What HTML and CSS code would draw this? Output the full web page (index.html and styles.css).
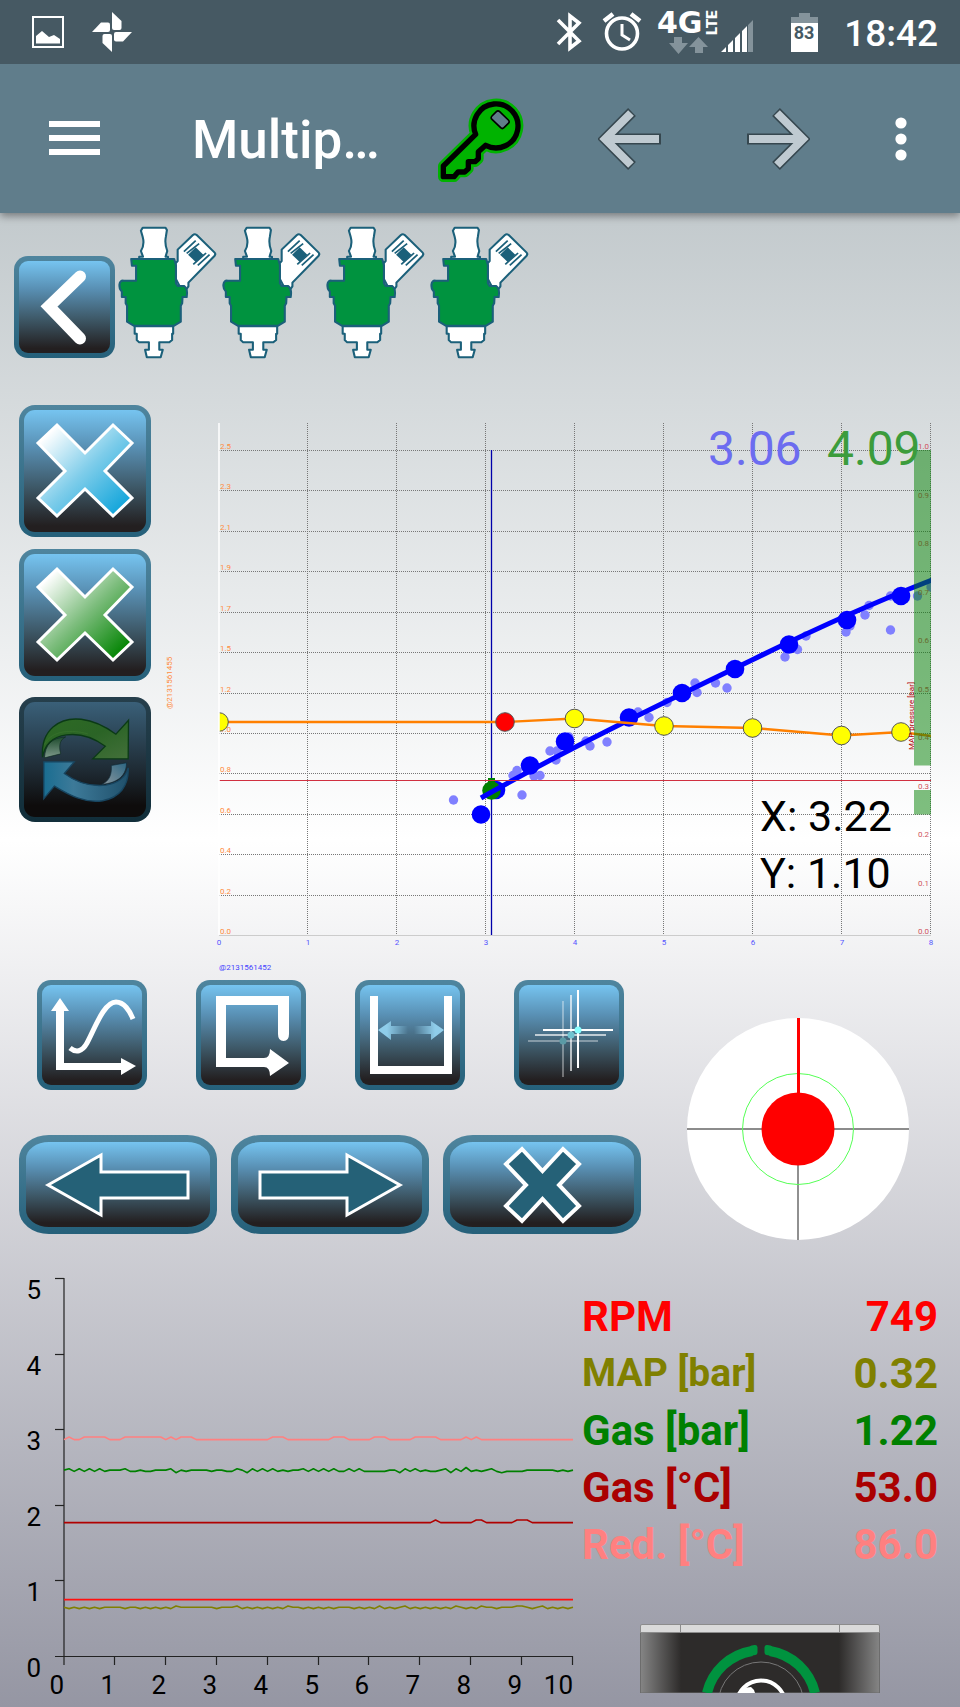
FILE: index.html
```html
<!DOCTYPE html>
<html lang="en">
<head>
<meta charset="utf-8">
<meta name="viewport" content="width=device-width, initial-scale=1">
<title>Multipoint calibration</title>
<link rel="stylesheet" href="styles.css">
</head>
<body>
<svg class="defs" aria-hidden="true">
  <defs>
    <linearGradient id="gBlue" x1="0" y1="0" x2="1" y2="1"><stop offset=".1" stop-color="#fff"/><stop offset=".5" stop-color="#7fcdea"/><stop offset=".9" stop-color="#14a6db"/></linearGradient>
    <linearGradient id="gGreen" x1="0" y1="0" x2="1" y2="1"><stop offset=".1" stop-color="#fff"/><stop offset=".5" stop-color="#7dbd7d"/><stop offset=".9" stop-color="#058505"/></linearGradient>
    <linearGradient id="fadeL"><stop offset=".3" stop-color="#8fcdea"/><stop offset="1" stop-color="#8fcdea" stop-opacity="0"/></linearGradient>
    <linearGradient id="fadeR"><stop offset="0" stop-color="#8fcdea" stop-opacity="0"/><stop offset=".7" stop-color="#8fcdea"/></linearGradient>
    <linearGradient id="leaf" x1="0" y1="0" x2="1" y2="1"><stop offset="0" stop-color="#2d6a24"/><stop offset=".5" stop-color="#2b6426"/><stop offset="1" stop-color="#43703a"/></linearGradient>
    <linearGradient id="wave"><stop offset="0" stop-color="#1a6d91"/><stop offset=".35" stop-color="#3d7a99"/><stop offset="1" stop-color="#20506b"/></linearGradient>
    <linearGradient id="tailG" x1="0" y1="0" x2="0" y2="1"><stop offset="0" stop-color="#1d4a2c"/><stop offset="1" stop-color="#7f9a8c"/></linearGradient>
    <linearGradient id="tailB" x1="0" y1="1" x2="1" y2="0"><stop offset="0" stop-color="#8c979d"/><stop offset="1" stop-color="#2c6683"/></linearGradient>
    <linearGradient id="metal"><stop offset="0" stop-color="#858585"/><stop offset=".17" stop-color="#2d2b2a"/><stop offset=".83" stop-color="#2d2b2a"/><stop offset="1" stop-color="#858585"/></linearGradient>
    <symbol id="injector" viewBox="340 30 300 405" preserveAspectRatio="none">
      <g stroke="#1b607a" stroke-width="6" stroke-linejoin="round">
        <path fill="#fff" d="M414 38H480L484 45 481 65C477 85 480 95 485 108L480 125H487V132H404V125H415L409 108C417 95 418 80 414 65L409 47Z"/>
        <path fill="#fff" d="M509 145L515 138V104L559 60Q564 56 570 60L621 112Q626 117 621 123L546 203V214L539 224L520 212 509 190Z"/>
        <path fill="#00933f" d="M381 132H505L510 150V205L515 213H534Q545 222 541 246H529L528 265 524 272V320L505 332H388L369 320V272L365 265V246H354V230C343 218 345 195 359 197H395V152H383Z"/>
        <path fill="#fff" d="M391 334H502V356H499V375L491 382H462V404H472L466 427H426L421 404H432V382H404L397 375V356H391Z"/>
      </g>
      <path fill="#1b607a" d="M567 97L589 119 567 141 545 119Z"/>
      <path fill="none" stroke="#1b607a" stroke-width="5" d="M533 110L567 77M541 115L577 86M560 148L597 114M573 151L607 119"/>
    </symbol>
    <symbol id="cross" viewBox="0 0 132 132"><path stroke="#fff" stroke-width="3" d="M38 20L66 48 94 20 113 38 86 66 113 93 94 111 66 84 38 111 19 93 46 66 19 38Z"/></symbol>
    <symbol id="arrow" viewBox="0 0 65 62">
      <path fill="none" stroke="#36474f" stroke-width="11" stroke-linejoin="miter" d="M34 4L7 31 34 58M12 31H63"/>
      <path fill="none" stroke="#bfcad1" stroke-width="8" d="M33 5L7 31 33 57M9 31H61"/>
    </symbol>
  </defs>
</svg>

<header>
  <div class="status">
    <svg width="104" height="40" viewBox="30 12 104 40">
      <path fill="none" stroke="#fff" stroke-width="2" d="M33 17H63V47H33Z"/><path fill="#fff" d="M36 36L42 31 49 37 54 35 60 39V43.500H36Z"/>
      <g fill="#fff"><path id="vane" d="M112 12L121.500 21V28Q121.500 30 119.500 30H114Q112 30 112 28Z"/><use href="#vane" transform="rotate(90 112 32)"/><use href="#vane" transform="rotate(180 112 32)"/><use href="#vane" transform="rotate(270 112 32)"/></g>
    </svg>
    <div class="status-right">
      <svg width="266" height="64" viewBox="554 0 266 64">
        <path fill="none" stroke="#fff" stroke-width="3.600" d="M558 20L579 41 570 48V16L579 23 558 44"/>
        <g fill="none" stroke="#fff" stroke-width="3.600"><circle cx="622" cy="33.500" r="15.500"/><path stroke-width="3" d="M622 24V35L630 40"/><path stroke-width="4.500" d="M604 21L613 14M631 14L640 21"/></g>
        <text class="net" x="657" y="33">4G</text>
        <text class="lte" transform="translate(717 35) rotate(-90)">LTE</text>
        <g fill="#84939b"><path d="M674 37H682V43H688L678.500 54 669 43H674ZM695 53H703V47H708L698.500 37 689 47H695Z"/><path d="M748 25V52H753V20ZM799 13H810V17H818V23H791V17H799Z"/></g>
        <path fill="#fff" d="M721 52L726 47V52ZM728 45V52H733V40ZM735 38V52H740V33ZM742 31V52H747V26ZM791 23H818V52H791Z"/>
        <text class="batt" x="804" y="39" text-anchor="middle">83</text>
      </svg>
      <time>18:42</time>
    </div>
  </div>
  <div class="appbar">
    <button class="plain" aria-label="Menu"><svg width="51" height="35" viewBox="0 0 51 35"><path fill="#fff" d="M0 0H51V6H0ZM0 14H51V20H0ZM0 28H51V34H0Z"/></svg></button>
    <h1>Multip…</h1>
    <button class="plain key" aria-label="Key"><svg width="100" height="95" viewBox="0 0 300 285">
      <g stroke-linejoin="round"><path fill="#00b300" stroke="#00b300" stroke-width="32" d="M137 130L40 225V257H72L84 243H104L115 233V212H135L145 203V182L167 163A66 66 0 1 0 137 130Z"/>
      <path fill="#00b300" stroke="#000" stroke-width="16" d="M137 130L40 225V257H72L84 243H104L115 233V212H135L145 203V182L167 163A66 66 0 1 0 137 130Z"/>
      <path fill="#607d8b" stroke="#000" stroke-width="5" d="M199 62Q204 57 209 62L235 87Q240 92 235 97L222 110Q217 115 212 110L186 85Q181 80 186 75Z"/></g></svg></button>
    <button class="plain prev" aria-label="Previous"><svg width="65" height="62"><use href="#arrow"/></svg></button>
    <button class="plain next" aria-label="Next"><svg class="flip" width="65" height="62"><use href="#arrow"/></svg></button>
    <button class="plain more" aria-label="More"><svg width="26" height="44" viewBox="0 0 26 44"><g fill="#fff"><circle cx="13" cy="6" r="5.600"/><circle cx="13" cy="22" r="5.600"/><circle cx="13" cy="38" r="5.600"/></g></svg></button>
  </div>
</header>

<main>
  <section class="injectors">
    <button class="tile back" aria-label="Back"><svg viewBox="0 0 101 101"><path fill="none" stroke="#fff" stroke-width="12" stroke-linecap="round" d="M66 20L35 50 66 82"/></svg></button>
    <div class="inj-list">
      <svg><use href="#injector"/></svg><svg><use href="#injector"/></svg><svg><use href="#injector"/></svg><svg><use href="#injector"/></svg>
    </div>
  </section>

  <section class="map">
    <div class="side">
      <button class="tile sq" aria-label="Clear petrol points"><svg viewBox="0 0 132 132" fill="url(#gBlue)"><use href="#cross"/></svg></button>
      <button class="tile sq" aria-label="Clear gas points"><svg viewBox="0 0 132 132" fill="url(#gGreen)"><use href="#cross"/></svg></button>
      <button class="tile sq dim" aria-label="Refresh"><svg viewBox="27 22 399 376" preserveAspectRatio="none">
        <path fill="url(#tailG)" stroke="#0d2a20" stroke-width="2" d="M104 205C106 165 125 145 168 142C152 150 146 165 153 193Z"/>
        <path fill="url(#leaf)" stroke="#0b3a16" stroke-width="4" d="M98 203C92 120 150 82 215 89C257 94 290 112 320 134L358 92 357 208H250L288 170C252 144 215 130 170 136C125 143 105 165 98 203Z"/>
        <path fill="none" stroke="#417e32" stroke-width="2" opacity=".6" d="M104 165C125 120 190 120 235 133"/>
        <path fill="url(#tailB)" stroke="#0f2a38" stroke-width="2" d="M306 228L352 220C352 255 330 280 277 285C300 275 308 255 306 228Z"/>
        <path fill="url(#wave)" stroke="#174560" stroke-width="4" d="M102 217H194L164 252C205 282 245 292 290 287C330 280 350 262 357 235C360 290 330 325 280 334C225 342 180 318 134 290L102 328Z"/>
      </svg></button>
    </div>
    <svg class="chart" id="map-chart" viewBox="151 405 809 570" role="img" aria-label="Injection map"></svg>
  </section>

  <section class="controls">
    <div class="pads">
      <div class="row tools">
        <button class="tile tool" aria-label="Curve"><svg viewBox="0 0 110 110"><path fill="#fff" d="M23 18L32 31H27V83H84V78L99 86 84 95V90H19V31H14Z"/><path fill="none" stroke="#fff" stroke-width="5" d="M33 68C39 73 45 72 50 63C58 48 67 22 79 22C87 22 93 31 96 39"/></svg></button>
        <button class="tile tool" aria-label="Loop"><svg viewBox="0 0 110 110"><path fill="#fff" d="M20 16H93V54Q93 61 87.500 61Q82 61 82 54V25H30V78H68Q74 78 74 69L93 83 74 96Q74 87 68 87H20Z"/></svg></button>
        <button class="tile tool" aria-label="Width"><svg viewBox="0 0 110 110"><path fill="#fff" d="M15 16H23V86H89V16H97V94H15Z"/><path fill="url(#fadeL)" d="M23 50L36 41V46H53V54H36V60Z"/><path fill="url(#fadeR)" d="M89 50L76 41V46H59V54H76V60Z"/></svg></button>
        <button class="tile tool" aria-label="Track"><svg viewBox="0 0 110 110">
          <g stroke="#fff" stroke-width="2"><path opacity=".35" d="M49 21V97M14 61H84"/><path opacity=".65" d="M57 15V91M21 55H92"/><path d="M64 10V88M29 50H99"/></g>
          <circle cx="49" cy="61" r="3.500" fill="#5a9aa5"/><circle cx="57" cy="55" r="3.500" fill="#6fc3d0"/><circle cx="64" cy="50" r="3.500" fill="#8ff"/></svg></button>
      </div>
      <div class="row moves">
        <button class="tile wide" aria-label="Move left"><svg viewBox="0 0 198 99"><path id="fat" fill="#256177" stroke="#fff" stroke-width="3" d="M29 50L82 20V37H169V63H82V80Z"/></svg></button>
        <button class="tile wide" aria-label="Move right"><svg viewBox="0 0 198 99"><use href="#fat" transform="translate(198) scale(-1 1)"/></svg></button>
        <button class="tile wide" aria-label="Delete"><svg viewBox="0 0 198 99"><path fill="#256177" stroke="#fff" stroke-width="4" d="M79 14L99.500 36 120 14 136 29 116 50 136 71 120 86 99.500 64 79 86 63 71 83 50 63 29Z"/></svg></button>
      </div>
    </div>
    <svg class="dial" viewBox="0 0 222 222" role="img" aria-label="Deviation">
      <circle cx="111" cy="111" r="111" fill="#fff"/><path stroke="#666" stroke-width="1.500" d="M0 111H222"/><path stroke="#909090" stroke-width="2" d="M111 111V222"/>
      <circle cx="111" cy="111" r="55.500" fill="none" stroke="#5f5"/><path stroke="red" stroke-width="3" d="M111.500 0V111"/><circle cx="111" cy="111" r="36.500" fill="red"/>
    </svg>
  </section>

  <section class="live">
    <svg class="trend" id="trend-chart" viewBox="0 0 576 447" role="img" aria-label="Live values"></svg>
    <div class="readout">
      <table>
        <tr class="rpm"><th scope="row">RPM</th><td>749</td></tr>
        <tr class="mapbar"><th scope="row">MAP [bar]</th><td>0.32</td></tr>
        <tr class="gasbar"><th scope="row">Gas [bar]</th><td>1.22</td></tr>
        <tr class="gastemp"><th scope="row">Gas [°C]</th><td>53.0</td></tr>
        <tr class="redtemp"><th scope="row">Red. [°C]</th><td>86.0</td></tr>
      </table>
      <svg class="device" width="240" height="69" viewBox="0 0 240 69">
        <path fill="url(#metal)" stroke="#6c6c6c" d="M.5 7H239.500V69H.5Z"/>
        <path fill="#dadada" stroke="#8c8c8c" d="M.5 8.500V2Q.5 .5 2 .5H238Q239.500 .5 239.500 2V8.500Z"/><path stroke="#8c8c8c" d="M40.500 0V8M199.500 0V8"/>
        <g fill="none"><path stroke="#00933f" stroke-width="10" d="M67 69A55.500 55.500 0 0 1 112 27M130 27A55.500 55.500 0 0 1 175 69"/><path stroke="#00933f" stroke-width="5" stroke-linejoin="round" d="M112 24L115 23.500V28.500L112 29ZM130 24L127 23.500V28.500L130 29Z"/><circle cx="121" cy="81" r="43" stroke="#777"/><circle cx="121" cy="81" r="24.500" stroke="#fff" stroke-width="4"/></g>
        <path fill="#fff" d="M99 69Q103 63 111 63Q114 65 115 69Z"/>
      </svg>
    </div>
  </section>
</main>
<script src="charts.js"></script>
</body>
</html>
```
FILE: styles.css
```css
* { box-sizing: border-box; }
body {
  margin: 0;
  min-height: 100vh;
  display: flex;
  flex-direction: column;
  font-family: Roboto, "Liberation Sans", sans-serif;
}
svg { display: block; }
button { padding: 0; margin: 0; cursor: pointer; }
.defs { position: absolute; width: 0; height: 0; }

header { position: relative; box-shadow: 0 3px 8px rgba(0, 0, 0, .4); }
.status {
  height: 64px;
  padding: 0 22px 0 30px;
  display: flex;
  align-items: center;
  justify-content: space-between;
  background: #465963;
  color: #fff;
}
.status-right { display: flex; align-items: center; gap: 24px; }
.status time { font-size: 37px; line-height: 40px; padding-top: 3px; font-weight: 500; }
.net { font: 700 30px "DejaVu Sans", sans-serif; fill: #fff; }
.lte { font: 900 15px Roboto, sans-serif; fill: #fff; }
.batt { font: 700 18px Roboto, sans-serif; fill: #465963; }

.appbar {
  height: 149px;
  padding: 0 46px 0 49px;
  display: flex;
  align-items: center;
  background: #607d8b;
}
.appbar h1 {
  flex: 1;
  margin: 0 0 0 92px;
  padding-top: 3px;
  color: #fff;
  font-size: 53px;
  line-height: 60px;
  font-weight: 500;
}
.plain { border: 0; background: none; }
.prev { margin-left: 68px; }
.next { margin-left: 82px; }
.more { margin-left: 78px; }
.flip { transform: scaleX(-1); }

main {
  flex: 1;
  background: linear-gradient(#c3cacd, #fff 42%, #9596a3);
}
.tile {
  border: 5px solid transparent;
  border-radius: 14px;
  background:
    linear-gradient(#76c4f0, #5990b4 30%, #3c5563 65%, #231f20 95%) padding-box,
    linear-gradient(#4f859e, #25607a) border-box;
}
.tile svg { width: calc(100% + 10px); height: calc(100% + 10px); margin: -5px; }
.dim {
  background:
    linear-gradient(#3a6079, #1e2a33 60%, #0e0c0c 90%) padding-box,
    linear-gradient(#263f4c, #112e3a) border-box;
}

.injectors { display: flex; align-items: flex-end; padding: 12px 14px 0; }
.back { width: 101px; height: 102px; margin-bottom: 2px; }
.inj-list { display: flex; margin-left: 2px; }
.inj-list svg { width: 104px; height: 135px; }

.map { display: flex; align-items: flex-start; padding: 45px 0 0 19px; }
.side { width: 132px; display: flex; flex-direction: column; gap: 12px; }
.sq { height: 132px; border-radius: 16px; }
.dim { height: 125px; margin-top: 4px; }
.chart { flex: 1; min-width: 0; }
.chart text { font-size: 8px; }
.chart .big { font-size: 48px; }
.chart .coord { font-size: 43px; }

.controls { display: flex; align-items: flex-start; }
.pads { width: 641px; padding-top: 5px; }
.row { display: flex; }
.tools { gap: 49px; padding-left: 37px; }
.moves { gap: 14px; padding-left: 19px; margin-top: 45px; }
.tool { width: 110px; height: 110px; }
.wide { width: 198px; height: 99px; border-width: 7px; border-radius: 30px / 24px; }
.wide svg { width: calc(100% + 14px); height: calc(100% + 14px); margin: -7px; }
.dial { width: 222px; margin: 43px 0 0 46px; }

.live { display: flex; align-items: flex-start; }
.trend { width: 60%; margin-top: 20px; }
.trend text { font-size: 26px; }
.readout { flex: 1; padding: 48px 22px 0 6px; }
.readout table { width: 100%; border-collapse: collapse; }
.readout th, .readout td {
  padding: 0;
  font-size: 42px;
  line-height: 57px;
  font-weight: 700;
  white-space: nowrap;
}
.readout th { text-align: left; }
.readout td { text-align: right; }
.readout .mapbar th { font-size: 39px; }
.rpm { color: #f00; }
.mapbar { color: #808000; }
.gasbar { color: #008000; }
.gastemp { color: #a00; }
.redtemp { color: #ff8080; }
.device { margin: 51px 0 0 58px; }
```
FILE: charts.js
```js
const NS = 'http://www.w3.org/2000/svg';
function add(parent, name, attrs, text) {
  const el = document.createElementNS(NS, name);
  for (const key in attrs) el.setAttribute(key, attrs[key]);
  if (text !== undefined) el.textContent = text;
  parent.appendChild(el);
  return el;
}

function drawMap(svg) {
  const left = 219, unit = 89, top = 450, bottom = 935, right = 931;

  // Axis labels and grid lie under the plotted data.
  const grid = { stroke: '#777', 'stroke-width': 1, 'stroke-dasharray': '1 1', fill: 'none' };
  for (let i = 1; i <= 8; i++) add(svg, 'path', { ...grid, d: `M${left + unit * i - .5} 423V935` });
  ['2.5','2.3','2.1','1.9','1.7','1.5','1.2','1.0','0.8','0.6','0.4','0.2','0.0'].forEach((t, i) => {
    const y = Math.round(top + (bottom - top) / 12 * i);
    if (i < 12) add(svg, 'path', { ...grid, d: `M${left} ${y + .5}H${right}` });
    add(svg, 'text', { x: left + 1, y: y - 1, fill: '#ff8c40' }, t);
  });

  const clip = add(svg, 'clipPath', { id: 'plot' });
  add(clip, 'rect', { x: left, y: 420, width: right - left, height: 520 });
  const plot = add(svg, 'g', { 'clip-path': 'url(#plot)' });

  const dots = [[453.5,800],[522,795],[513,775.5],[517,770.5],[534,776],[540,775.5],[550,751],[557,751],[556,760],[569,737],[586,741],[590,746],[607,742],[638,712],[649,717.5],[667,702.5],[695,683],[697,692.5],[715.5,683],[727,688],[785,657],[797.5,649.5],[806,636],[846,632],[850,626],[865,615],[869,605.5],[890.5,630],[890.5,596],[917.5,596],[931,587]];
  dots.forEach(([x, y]) => add(plot, 'circle', { cx: x, cy: y, r: 4.7, fill: '#8080ff' }));
  [[496,790],[481,814.5],[530,765.5],[565,741.5],[629,717.5],[682,693],[735,669],[789,644.5],[847,620],[901,596]]
    .forEach(([x, y]) => add(plot, 'circle', { cx: x, cy: y, r: 9.3, fill: '#00f' }));
  add(plot, 'path', { d: 'M491.500 450V935', stroke: '#00a', 'stroke-width': 1.3 });
  add(plot, 'circle', { cx: 491.5, cy: 790.5, r: 9.3, fill: '#008000' });
  add(plot, 'rect', { x: 488, y: 778, width: 7, height: 8, fill: '#008000' });
  add(plot, 'path', { d: 'M481 798C560 753 650 709 752 660C815 629 875 602 932 580', stroke: '#00f', 'stroke-width': 5, fill: 'none' });

  const points = [[219,722],[505,722],[574.5,718.5],[664,726],[752.5,728],[841.5,735.5],[901,732],[931,736]];
  add(plot, 'polyline', { points: points.join(' '), fill: 'none', stroke: '#ff8000', 'stroke-width': 2.4 });
  points.slice(0, 7).forEach(([x, y], i) =>
    add(plot, 'circle', { cx: x, cy: y, r: 9.3, fill: i === 1 ? '#f00' : '#ff0', stroke: '#555', 'stroke-width': 1 }));
  add(plot, 'path', { d: 'M219 780.500H931', stroke: '#d03040', 'stroke-width': 1.2 });
  add(svg, 'text', { transform: 'translate(914 750) rotate(-90)', fill: '#b00000' }, 'MAP pressure [bar]');

  add(svg, 'path', { d: 'M219 423V935', stroke: '#fff', 'stroke-width': 1.5 });
  add(svg, 'path', { d: 'M219 935.500H931', stroke: '#ccc' });
  for (let i = 0; i <= 10; i++)
    add(svg, 'text', { x: 929, y: 449 + 48.5 * i, 'text-anchor': 'end', fill: '#cf5560' }, (1 - i / 10).toFixed(1));
  for (let i = 0; i <= 8; i++)
    add(svg, 'text', { x: left + unit * i, y: 945, 'text-anchor': 'middle', fill: '#55f' }, i);
  add(svg, 'rect', { x: 914, y: 450, width: 17, height: 315.5, fill: '#008000', opacity: .5 });
  add(svg, 'rect', { x: 914, y: 790, width: 17, height: 24.5, fill: '#008000', opacity: .5 });
  add(svg, 'text', { x: 219, y: 970, fill: '#44f' }, '@2131561452');
  add(svg, 'text', { transform: 'translate(172 709) rotate(-90)', fill: '#ff8c40' }, '@2131561455');
  add(svg, 'text', { class: 'big', x: 708, y: 465, fill: '#6c6cf0' }, '3.06');
  add(svg, 'text', { class: 'big', x: 827, y: 465, fill: '#3c9c3c' }, '4.09');
  add(svg, 'text', { class: 'coord', x: 760, y: 831 }, 'X: 3.22');
  add(svg, 'text', { class: 'coord', x: 760, y: 888 }, 'Y: 1.10');
}

function drawTrend(svg) {
  const left = 64, bottom = 396, ux = 50.9, uy = 75.6;
  const axis = { stroke: '#222', 'stroke-width': 1.2, fill: 'none' };
  add(svg, 'path', { ...axis, d: `M${left} 18V405M55 ${bottom}.5H573` });
  for (let i = 0; i <= 5; i++) {
    const y = Math.round(bottom - uy * i);
    if (i) add(svg, 'path', { ...axis, d: `M55 ${y + .5}H64` });
    add(svg, 'text', { x: 41, y: y + 21, 'text-anchor': 'end' }, i);
  }
  for (let i = 0; i <= 10; i++) {
    const x = Math.round(left + ux * i);
    if (i) add(svg, 'path', { ...axis, d: `M${x - .5} 396V405` });
    add(svg, 'text', { x, y: 434, 'text-anchor': 'end' }, i);
  }
  const bump = (ranges) => {
    const a = Array(101).fill('3');
    ranges.forEach(([s, e]) => { for (let i = s; i <= e; i++) a[i] = '1'; });
    return a.join('');
  };
  // Each digit is one sample: the higher it is, the lower the line runs.
  const series = [
    ['#ff8080', 175.7, bump([[1,1],[4,8],[12,19],[21,21],[23,25],[41,43],[53,55],[61,63],[69,73],[79,79],[81,81]])],
    ['#008000', 207.5, '21313131322213323322214232222322331241313132322131313133131333332241313233214130323213433332222223232'],
    ['#b00000', 258.7, bump([[73,73],[81,82],[89,91]])],
    ['#ff1010', 335.7, bump([])],
    ['#808000', 344.7, '23232323222232232323231222222232221323232323122323232322232323132321323232323123231223222112321323232']
  ];
  series.forEach(([stroke, base, data]) => {
    const pts = data.split('').map((d, i) => `${left + i * ux / 10},${(base + d * 1.3).toFixed(1)}`);
    add(svg, 'polyline', { points: pts.join(' '), fill: 'none', stroke, 'stroke-width': 1.6, 'stroke-linejoin': 'round' });
  });
}

drawMap(document.getElementById('map-chart'));
drawTrend(document.getElementById('trend-chart'));
```
